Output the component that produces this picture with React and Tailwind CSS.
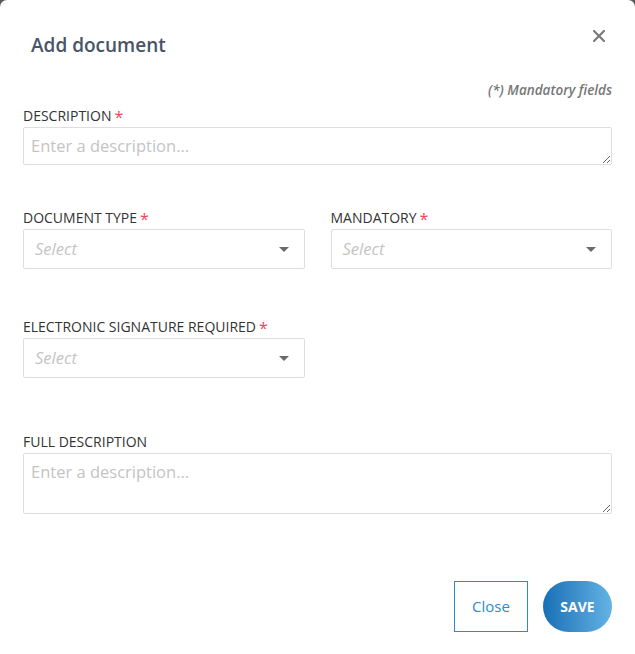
import { useState } from 'react'

const font = { fontFamily: '"Open Sans", "Noto Sans", sans-serif' }

const boxBase =
  'block w-full rounded-[2px] border border-[#dedede] bg-white text-[16.5px] text-[#333] outline-none placeholder:text-[#c4c4c4]'

function Label({ children, required }) {
  return (
    <label className="mb-[3px] flex h-[16px] items-center text-[14px] leading-[16px] text-[#333]">
      {children}
      {required && <span className="ml-[3px] h-[16px] text-[16px] leading-[18px] text-[#f0465a]">*</span>}
    </label>
  )
}

function FakeSelect() {
  return (
    <div className="flex h-[40px] w-full cursor-pointer items-center justify-between rounded-[2px] border border-[#dedede] bg-white pl-[11px] pr-[15px]">
      <span className="text-[16.5px] italic text-[#c4c4c4]">Select</span>
      <svg width="10" height="5" viewBox="0 0 10 5">
        <path d="M0 0 L10 0 L5 5 Z" fill="#6b6b6b" />
      </svg>
    </div>
  )
}

export default function App() {
  const [desc, setDesc] = useState('')
  const [full, setFull] = useState('')

  return (
    <div className="min-h-[654px] bg-[#5a5a5a]" style={font}>
      <div className="flex h-[654px] w-full flex-col rounded-t-[7px] bg-white px-[23px]">
        {/* Header */}
        <div className="mt-[33px] flex h-[24px] items-center justify-between pl-[8px]">
          <h1 className="text-[19px] font-semibold leading-[24px] text-[#4a5468]">Add document</h1>
          <button className="mr-[7px] mt-[-18px] p-0">
            <svg width="12" height="12" viewBox="0 0 12 12">
              <path d="M1 1 L11 11 M11 1 L1 11" stroke="#7a7a7a" strokeWidth="2.2" strokeLinecap="square" />
            </svg>
          </button>
        </div>

        <p className="mt-[26px] h-[14px] text-right text-[13.5px] font-semibold italic leading-[14px] text-[#777]">
          (*) Mandatory fields
        </p>

        <div className="mt-[11px]">
          <Label required>DESCRIPTION</Label>
          <textarea
            rows={1}
            value={desc}
            onChange={(e) => setDesc(e.target.value)}
            placeholder="Enter a description..."
            className={`${boxBase} h-[38px] resize-y px-[7px] py-[8px] leading-[20px]`}
          />
        </div>

        <div className="mt-[45px] grid grid-cols-2 gap-[26px]">
          <div>
            <Label required>DOCUMENT TYPE</Label>
            <FakeSelect />
          </div>
          <div>
            <Label required>MANDATORY</Label>
            <FakeSelect />
          </div>
        </div>

        <div className="mt-[50px] grid grid-cols-2 gap-[26px]">
          <div>
            <Label required>ELECTRONIC SIGNATURE REQUIRED</Label>
            <FakeSelect />
          </div>
        </div>

        <div className="mt-[56px]">
          <Label>FULL DESCRIPTION</Label>
          <textarea
            rows={2}
            value={full}
            onChange={(e) => setFull(e.target.value)}
            placeholder="Enter a description..."
            className={`${boxBase} h-[61px] resize-y px-[7px] py-[8px] leading-[20px]`}
          />
        </div>

        {/* Footer */}
        <div className="mt-[67px] flex items-center justify-end gap-[15px]">
          <button className="h-[51px] w-[74px] border border-[#2a8dc9] bg-white text-[15px] text-[#2a8dc9]">
            Close
          </button>
          <button className="h-[51px] w-[69px] rounded-full bg-linear-to-r from-[#1670b6] to-[#63b3e4] text-[14px] font-bold text-white">
            SAVE
          </button>
        </div>
      </div>
    </div>
  )
}
